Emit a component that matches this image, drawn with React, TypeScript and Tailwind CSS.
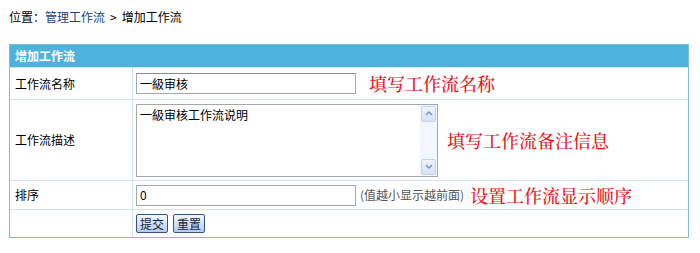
import React from "react";

const font = { fontFamily: '"Noto Sans CJK SC", "Liberation Sans", sans-serif' };
const redFont = { fontFamily: '"Noto Serif CJK SC", "Noto Sans CJK SC", serif' };

function ScrollArrow({ up }: { up?: boolean }) {
  return (
    <div className="h-[16px] w-[15px] border border-[#c3d3ec] bg-gradient-to-b from-[#eef4fc] to-[#d5e2f5] flex items-center justify-center rounded-[2px]">
      <svg width="8" height="5" viewBox="0 0 8 5">
        <path d={up ? "M1 4 L4 1 L7 4" : "M1 1 L4 4 L7 1"} stroke="#6f8fbf" strokeWidth="1.4" fill="none" />
      </svg>
    </div>
  );
}

export default function App() {
  return (
    <div className="w-[700px] h-[253px] bg-white text-[12px] text-black" style={font}>
      <div className="pl-[9px] pt-[9px] h-[44px] leading-[16px] flex">
        <span>位置：</span>
        <span className="text-[#1b3f80]">管理工作流</span>
        <span className="mx-[5px]">&gt;</span>
        <span>增加工作流</span>
      </div>
      <div className="ml-[9px] w-[680px] border border-[#79bde0]">
        <div className="h-[22px] bg-[#4fb2dd] text-white font-bold flex items-center pl-[5px]">增加工作流</div>
        <div className="grid grid-cols-[123px_1fr]">
          {/* row 1 */}
          <div className="h-[32px] border-t border-[#cfe6f2] border-r flex items-center pl-[5px]">工作流名称</div>
          <div className="h-[32px] border-t border-[#cfe6f2] flex items-center pl-[3px]">
            <div className="w-[220px] h-[21px] border border-[#a7a7a7] border-t-[#8a8a8a] flex items-center pl-[3px]">一級审核</div>
            <span className="ml-[13px] text-[18px] font-medium text-[#e8161b]" style={redFont}>填写工作流名称</span>
          </div>
          {/* row 2 */}
          <div className="h-[81px] border-t border-[#cfe6f2] border-r flex items-center pl-[5px]">工作流描述</div>
          <div className="h-[81px] border-t border-[#cfe6f2] flex items-center pl-[3px]">
            <div className="w-[302px] h-[73px] border border-[#a7a7a7] flex">
              <div className="flex-1 pl-[3px] pt-[2px] leading-[16px]">一級审核工作流说明</div>
              <div className="w-[17px] bg-[#f3f7fd] flex flex-col justify-between items-center py-[1px]">
                <ScrollArrow up />
                <ScrollArrow />
              </div>
            </div>
            <span className="ml-[9px] text-[18px] font-medium text-[#e8161b]" style={redFont}>填写工作流备注信息</span>
          </div>
          {/* row 3 */}
          <div className="h-[29px] border-t border-[#cfe6f2] border-r flex items-center pl-[5px]">排序</div>
          <div className="h-[29px] border-t border-[#cfe6f2] flex items-center pl-[3px]">
            <div className="w-[220px] h-[21px] border border-[#a7a7a7] flex items-center pl-[3px]">0</div>
            <span className="ml-[4px] text-[#555]">(值越小显示越前面)</span>
            <span className="ml-[6px] text-[18px] font-medium text-[#e8161b]" style={redFont}>设置工作流显示顺序</span>
          </div>
          {/* row 4 */}
          <div className="h-[28px] border-t border-[#cfe6f2] border-r"></div>
          <div className="h-[28px] border-t border-[#cfe6f2] flex items-center pl-[3px] gap-[5px]">
            <button className="h-[19px] px-[3px] border border-[#34547f] rounded-[2px] bg-gradient-to-b from-[#f4f8fe] to-[#b9cbea] text-[#13243f] leading-[15px]">提交</button>
            <button className="h-[19px] px-[3px] border border-[#34547f] rounded-[2px] bg-gradient-to-b from-[#f4f8fe] to-[#b9cbea] text-[#13243f] leading-[15px]">重置</button>
          </div>
        </div>
      </div>
    </div>
  );
}
